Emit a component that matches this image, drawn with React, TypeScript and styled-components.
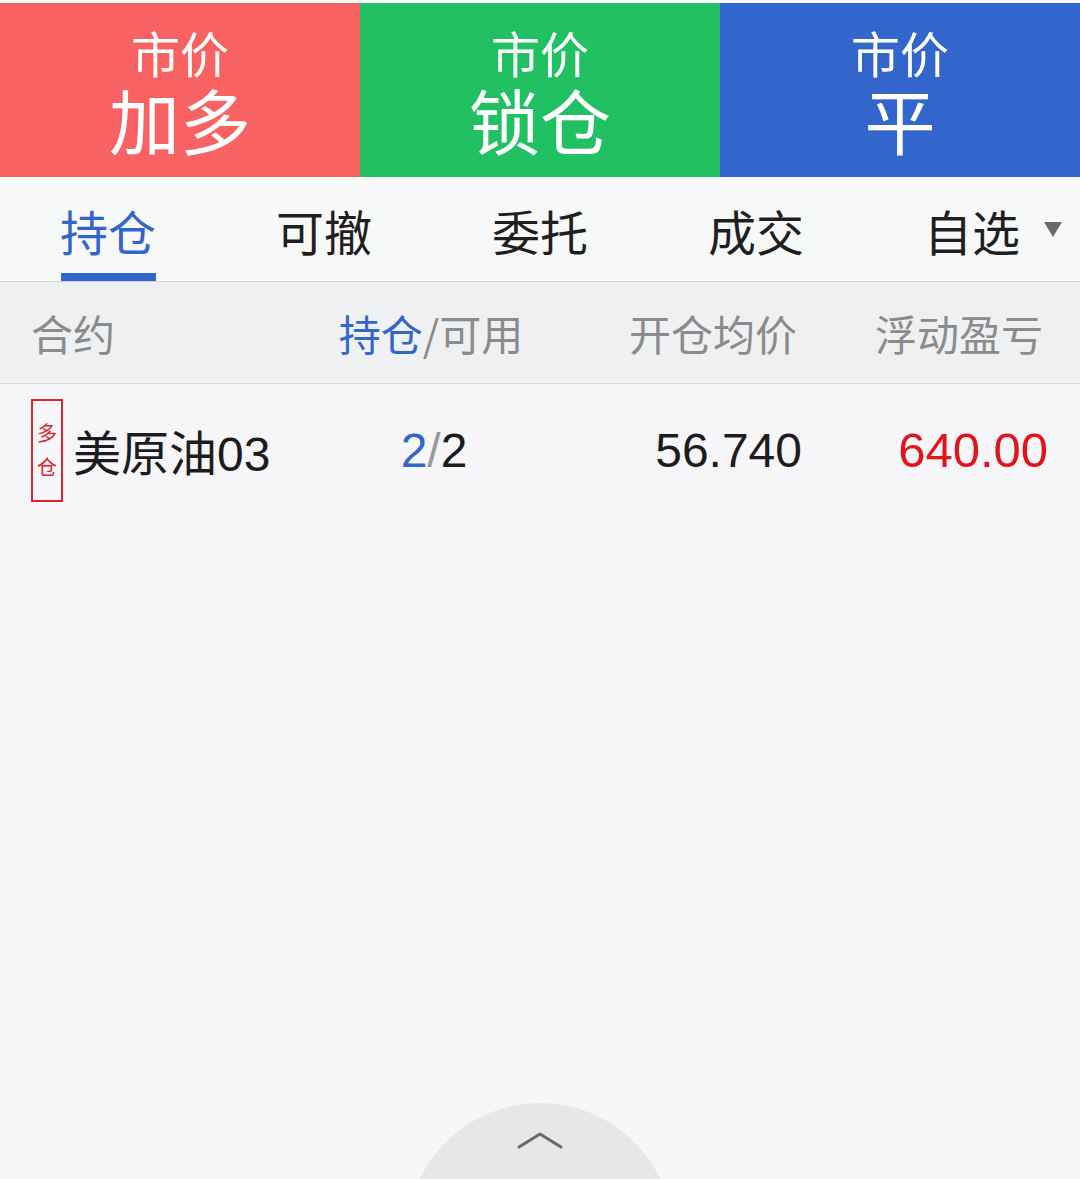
import styled, { createGlobalStyle } from 'styled-components';

const GlobalStyle = createGlobalStyle`
  html, body {
    margin: 0;
    padding: 0;
    background: #f6f6f8;
    overflow: hidden;
  }
  body {
    font-family: 'Liberation Sans', 'Noto Sans CJK SC', sans-serif;
  }
`;

const Page = styled.div`
  position: relative;
  height: 100vh;
  overflow: hidden;
  background: #f6f6f8;
  padding-top: 3px;
  box-sizing: border-box;
`;

const TopStrip = styled.div`
  position: absolute;
  top: 0;
  left: 0;
  right: 0;
  height: 3px;
  background: #f8f9f9;
`;

const ActionBar = styled.div`
  display: grid;
  grid-template-columns: repeat(3, 1fr);
  height: 174px;
`;

const ActionButton = styled.button<{ $bg: string }>`
  display: flex;
  flex-direction: column;
  align-items: center;
  justify-content: center;
  border: none;
  margin: 0;
  padding: 0;
  background: ${(p) => p.$bg};
  color: #fff;
  font-family: 'Noto Sans CJK SC', sans-serif;
  cursor: pointer;
`;

const ActionSub = styled.span`
  display: block;
  height: 56px;
  font-size: 49px;
  line-height: 56px;
`;

const ActionMain = styled.span`
  display: block;
  height: 76px;
  font-size: 71px;
  line-height: 76px;
`;

const Tabs = styled.div`
  display: grid;
  grid-template-columns: repeat(5, 1fr);
  background: #f7f8f8;
  border-bottom: 1px solid #d3d4d6;
`;

const Tab = styled.div<{ $active?: boolean }>`
  position: relative;
  display: flex;
  flex-direction: column;
  align-items: center;
  padding-top: 25px;
  font-family: 'Noto Sans CJK SC', sans-serif;
  font-size: 48px;
  line-height: 56px;
  color: ${(p) => (p.$active ? '#3366cc' : '#1f1f1f')};

  &::after {
    content: '';
    display: block;
    width: 95px;
    height: 8px;
    margin-top: 15px;
    background: ${(p) => (p.$active ? '#3366cc' : 'transparent')};
  }
`;

const Caret = styled.span`
  position: absolute;
  right: 18px;
  top: 45px;
  width: 0;
  height: 0;
  border-left: 9px solid transparent;
  border-right: 9px solid transparent;
  border-top: 15px solid #6a6b6e;
`;

const Columns = styled.div`
  display: grid;
  grid-template-columns: 300px 200px 271px 1fr;
  align-items: center;
  padding: 0 32px 0 31px;
`;

const HeaderRow = styled(Columns)`
  height: 101px;
  background: #eff0f1;
  border-bottom: 1px solid #d6d7d9;
  font-family: 'Noto Sans CJK SC', sans-serif;
  font-size: 42px;
  color: #8a8b8d;
`;

const HeadCell = styled.div<{ $align: 'left' | 'center' | 'right' }>`
  text-align: ${(p) => p.$align};
  white-space: nowrap;
  padding-right: ${(p) => (p.$align === 'right' ? '5px' : '0')};
`;

const Blue = styled.span`
  color: #3366cc;
`;

const DataRow = styled(Columns)`
  height: 132px;
  font-size: 48px;
  color: #1c1c1c;
`;

const NameCell = styled.div`
  display: flex;
  align-items: center;
  gap: 10px;
`;

const Badge = styled.div`
  width: 28px;
  height: 99px;
  border: 2px solid #d8262c;
  display: flex;
  flex-direction: column;
  align-items: center;
  justify-content: center;
  gap: 12px;
  font-family: 'Noto Sans CJK SC', sans-serif;
  font-size: 20px;
  line-height: 22px;
  color: #d8262c;
`;

const Cell = styled.div<{ $align: 'center' | 'right'; $color?: string; $size?: number }>`
  text-align: ${(p) => p.$align};
  color: ${(p) => p.$color || '#1c1c1c'};
  font-size: ${(p) => p.$size || 48}px;
  padding-left: ${(p) => (p.$align === 'center' ? '6px' : '0')};
`;

const Slash = styled.span`
  color: #9a9a9a;
`;

const FloatToggle = styled.div`
  position: absolute;
  left: 50%;
  bottom: -190px;
  width: 266px;
  height: 266px;
  margin-left: -133px;
  border-radius: 50%;
  background: #e7e7e9;
  display: flex;
  justify-content: center;
  padding-top: 28px;
  box-sizing: border-box;
`;

export default function App() {
  return (
    <>
      <GlobalStyle />
      <Page>
        <TopStrip />
        <ActionBar>
          <ActionButton $bg="#f86262">
            <ActionSub>市价</ActionSub>
            <ActionMain>加多</ActionMain>
          </ActionButton>
          <ActionButton $bg="#21c163">
            <ActionSub>市价</ActionSub>
            <ActionMain>锁仓</ActionMain>
          </ActionButton>
          <ActionButton $bg="#3366cc">
            <ActionSub>市价</ActionSub>
            <ActionMain>平</ActionMain>
          </ActionButton>
        </ActionBar>

        <Tabs>
          <Tab $active>持仓</Tab>
          <Tab>可撤</Tab>
          <Tab>委托</Tab>
          <Tab>成交</Tab>
          <Tab>
            自选
            <Caret />
          </Tab>
        </Tabs>

        <HeaderRow>
          <HeadCell $align="left">合约</HeadCell>
          <HeadCell $align="center">
            <Blue>持仓</Blue>/可用
          </HeadCell>
          <HeadCell $align="right">开仓均价</HeadCell>
          <HeadCell $align="right">浮动盈亏</HeadCell>
        </HeaderRow>

        <DataRow>
          <NameCell>
            <Badge>
              <span>多</span>
              <span>仓</span>
            </Badge>
            <span>美原油03</span>
          </NameCell>
          <Cell $align="center">
            <Blue>2</Blue>
            <Slash>/</Slash>2
          </Cell>
          <Cell $align="right">56.740</Cell>
          <Cell $align="right" $color="#e3131b" $size={49}>
            640.00
          </Cell>
        </DataRow>

        <FloatToggle>
          <svg width="46" height="18" viewBox="0 0 46 18" fill="none">
            <path
              d="M2 16 L23 3 L44 16"
              stroke="#68696c"
              strokeWidth="3"
              strokeLinecap="round"
              strokeLinejoin="round"
            />
          </svg>
        </FloatToggle>
      </Page>
    </>
  );
}
